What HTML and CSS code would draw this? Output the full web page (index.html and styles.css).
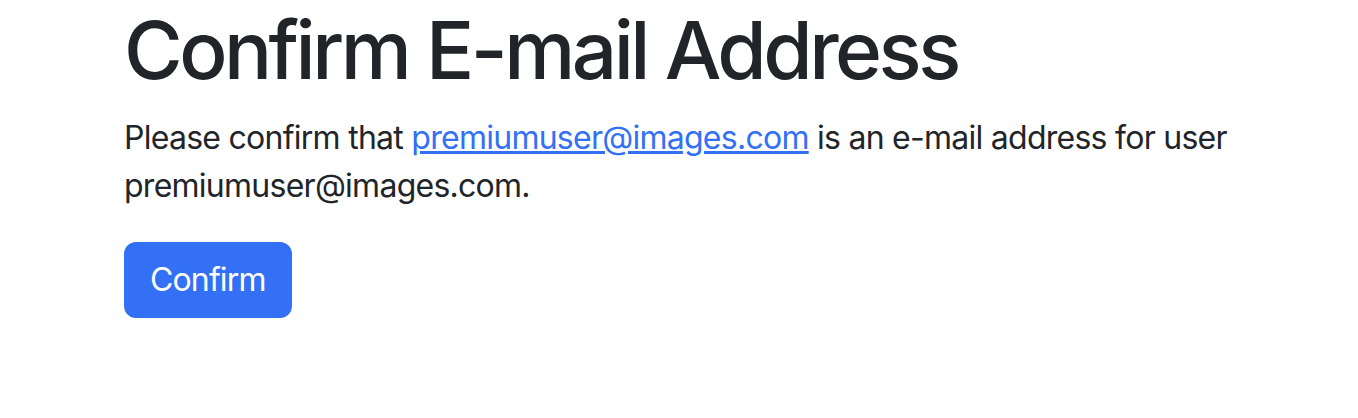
FILE: index.html
```html
<!DOCTYPE html>
<html lang="en">
<head>
<meta charset="utf-8">
<title>Confirm E-mail Address</title>
<link rel="stylesheet" href="styles.css">
</head>
<body>
<main class="container">
  <h1 class="title">Confirm E-mail Address</h1>
  <p class="lead-text">Please confirm that <a class="link" href="#">premiumuser@images.com</a> is an e-mail address for user premiumuser@images.com.</p>
  <form class="confirm-form">
    <button type="button" class="btn-primary">Confirm</button>
  </form>
</main>
</body>
</html>
```

FILE: styles.css
```css
html, body {
  margin: 0;
  padding: 0;
  background: #ffffff;
}
body {
  font-family: Inter, "Noto Sans", "Liberation Sans", sans-serif;
  font-size: 32px;
  line-height: 1.5;
  color: #212529;
  letter-spacing: -0.023em;
}
.container {
  padding: 2px 124px 0 124px;
}
.title {
  margin: 0 0 16px 0;
  font-size: 80px;
  font-weight: 500;
  line-height: 1.2;
  letter-spacing: -0.044em;
  color: #212529;
}
.lead-text {
  margin: 0 0 32px 0;
}
.link {
  color: #3470f5;
  text-decoration: underline;
}
.confirm-form {
  margin: 0;
}
.btn-primary {
  display: inline-block;
  font-family: inherit;
  font-size: 32px;
  line-height: 48px;
  letter-spacing: -0.027em;
  padding: 12px 24px;
  border: 2px solid #3470f5;
  border-radius: 12px;
  background: #3470f5;
  color: #ffffff;
  cursor: pointer;
}
```
